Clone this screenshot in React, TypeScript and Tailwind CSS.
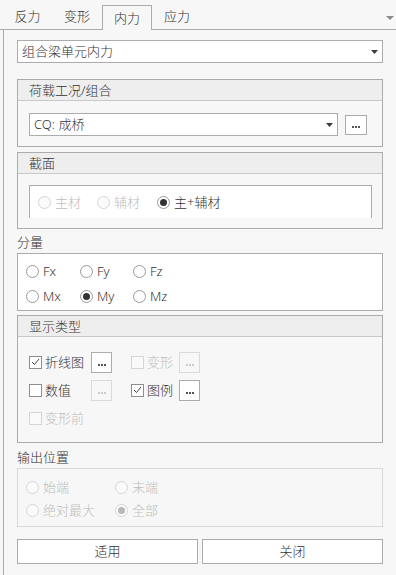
import React from "react";

const FONT = { fontFamily: '"Noto Sans", "Noto Sans CJK SC", sans-serif' };

const Arrow = ({ color = "#3c3c3c", w = 7 }: { color?: string; w?: number }) => (
  <svg width={w} height={4} viewBox={`0 0 ${w} 4`}>
    <polygon points={`0,0 ${w},0 ${w / 2},4`} fill={color} />
  </svg>
);

const Dots = ({ disabled }: { disabled?: boolean }) => (
  <div
    className={`w-[21px] h-[21px] shrink-0 flex items-end justify-center pb-[6px] gap-[1px] border ${
      disabled ? "border-[#dadada] bg-[#f7f7f7]" : "border-[#acacac] bg-white"
    }`}
  >
    {[0, 1, 2].map((i) => (
      <span key={i} className={`w-[2px] h-[2px] ${disabled ? "bg-[#cccccc]" : "bg-[#555]"}`} />
    ))}
  </div>
);

const Radio = ({
  label,
  checked,
  disabled,
  w,
}: {
  label: string;
  checked?: boolean;
  disabled?: boolean;
  w: string;
}) => (
  <div className={`flex items-center ${w}`}>
    <span
      className={`w-[13px] h-[13px] rounded-full border flex items-center justify-center shrink-0 ${
        disabled ? "border-[#d6d6d6] bg-[#fbfbfb]" : "border-[#9a9a9a] bg-white"
      }`}
    >
      {checked && (
        <span className={`w-[7px] h-[7px] rounded-full ${disabled ? "bg-[#b8b8b8]" : "bg-[#333]"}`} />
      )}
    </span>
    <span className={`ml-[4px] ${disabled ? "text-[#bdbdbd]" : "text-[#333]"}`}>{label}</span>
  </div>
);

const Check = ({ label, checked, disabled, w }: { label: string; checked?: boolean; disabled?: boolean; w: string }) => (
  <div className={`flex items-center shrink-0 ${w}`}>
    <span
      className={`w-[13px] h-[13px] border flex items-center justify-center shrink-0 ${
        disabled ? "border-[#d6d6d6] bg-[#f9f9f9]" : "border-[#8e8e8e] bg-white"
      }`}
    >
      {checked && (
        <svg width="9" height="8" viewBox="0 0 9 8">
          <polyline points="1,4 3.5,6.5 8,1" fill="none" stroke="#444" strokeWidth="1" />
        </svg>
      )}
    </span>
    <span className={`ml-[3px] ${disabled ? "text-[#bdbdbd]" : "text-[#333]"}`}>{label}</span>
  </div>
);

const Group = ({ title, h, children }: { title: string; h: string; children: React.ReactNode }) => (
  <div className={`w-[366px] border border-[#acacac] flex flex-col ${h}`}>
    <div className="h-[21px] shrink-0 bg-[#eeeeee] border-b border-[#c9c9c9] flex items-center pl-[11px] text-[#333]">
      {title}
    </div>
    {children}
  </div>
);

export default function App() {
  const tabs = ["反力", "变形", "内力", "应力"];
  return (
    <div
      className="w-[396px] h-[575px] bg-[#f7f7f7] text-[13px] font-light leading-none text-[#333] overflow-hidden"
      style={FONT}
    >
      {/* tab strip */}
      <div className="relative h-[30px] flex items-end border-b border-[#acacac] pl-[3px]">
        {tabs.map((t, i) => (
          <div
            key={t}
            className={`h-[25px] flex items-center justify-center ${i === 0 ? "w-[49px]" : "w-[50px]"} ${
              i === 2 ? "border border-b-0 border-[#acacac] bg-[#f7f7f7] -mb-px" : ""
            }`}
          >
            {t}
          </div>
        ))}
        <div className="absolute right-[2px] top-[16px]">
          <Arrow color="#8a8a8a" w={8} />
        </div>
      </div>

      <div className="ml-[3px] h-[545px] border-l border-[#acacac] pl-[13px] flex flex-col">
        {/* main selector */}
        <div className="mt-[10px] w-[366px] h-[23px] border border-[#acacac] bg-white flex items-center justify-between pl-[4px] pr-[4px]">
          <span>组合梁单元内力</span>
          <Arrow />
        </div>

        <div className="mt-[16px]">
          <Group title="荷载工况/组合" h="h-[68px]">
            <div className="flex items-center pl-[11px] pt-[12px]">
              <div className="w-[309px] h-[23px] border border-[#acacac] bg-white flex items-center justify-between pl-[4px] pr-[4px]">
                <span>CQ: 成桥</span>
                <Arrow />
              </div>
              <div className="ml-[7px]">
                <div className="w-[22px] h-[20px] border border-[#acacac] bg-white flex items-end justify-center pb-[6px] gap-[1px]">
                  {[0, 1, 2].map((i) => (
                    <span key={i} className="w-[2px] h-[2px] bg-[#555]" />
                  ))}
                </div>
              </div>
            </div>
          </Group>
        </div>

        <div className="mt-[5px]">
          <Group title="截面" h="h-[77px]">
            <div className="pl-[11px] pt-[11px]">
              <div className="w-[343px] h-[33px] border-t border-x border-[#acacac] bg-white flex items-center pl-[8px]">
                <Radio label="主材" disabled w="w-[59px]" />
                <Radio label="辅材" disabled w="w-[60px]" />
                <Radio label="主+辅材" checked w="w-[80px]" />
              </div>
            </div>
          </Group>
        </div>

        <div className="mt-[3px] h-[21px] flex items-center">分量</div>
        <div className="w-[366px] h-[58px] border border-[#acacac] bg-white pl-[8px] pt-[5px] flex flex-col">
          <div className="h-[25px] flex items-center">
            <Radio label="Fx" w="w-[54px]" />
            <Radio label="Fy" w="w-[53px]" />
            <Radio label="Fz" w="w-[54px]" />
          </div>
          <div className="h-[25px] flex items-center">
            <Radio label="Mx" w="w-[54px]" />
            <Radio label="My" checked w="w-[53px]" />
            <Radio label="Mz" w="w-[54px]" />
          </div>
        </div>

        <div className="mt-[4px]">
          <Group title="显示类型" h="h-[128px]">
            <div className="pl-[11px] pt-[11px] flex flex-col">
              <div className="h-[28px] flex items-center">
                <div className="w-[102px] flex items-center">
                  <Check label="折线图" checked w="w-[62px]" />
                  <Dots />
                </div>
                <div className="flex items-center">
                  <Check label="变形" disabled w="w-[48px]" />
                  <Dots disabled />
                </div>
              </div>
              <div className="h-[28px] flex items-center">
                <div className="w-[102px] flex items-center">
                  <Check label="数值" w="w-[62px]" />
                  <Dots disabled />
                </div>
                <div className="flex items-center">
                  <Check label="图例" checked w="w-[48px]" />
                  <Dots />
                </div>
              </div>
              <div className="h-[28px] flex items-center">
                <Check label="变形前" disabled w="w-[80px]" />
              </div>
            </div>
          </Group>
        </div>

        <div className="mt-[4px] h-[21px] flex items-center">输出位置</div>
        <div className="w-[366px] h-[59px] border border-[#d9d9d9] pl-[8px] pt-[7px] flex flex-col">
          <div className="h-[23px] flex items-center">
            <Radio label="始端" disabled w="w-[89px]" />
            <Radio label="末端" disabled w="w-[60px]" />
          </div>
          <div className="h-[23px] flex items-center">
            <Radio label="绝对最大" disabled w="w-[89px]" />
            <Radio label="全部" checked disabled w="w-[60px]" />
          </div>
        </div>

        <div className="mt-[12px] w-[366px] flex gap-[4px]">
          <button className="w-[181px] h-[25px] border border-[#acacac] bg-white text-[#333]">适用</button>
          <button className="w-[181px] h-[25px] border border-[#acacac] bg-white text-[#333]">关闭</button>
        </div>
      </div>
    </div>
  );
}
